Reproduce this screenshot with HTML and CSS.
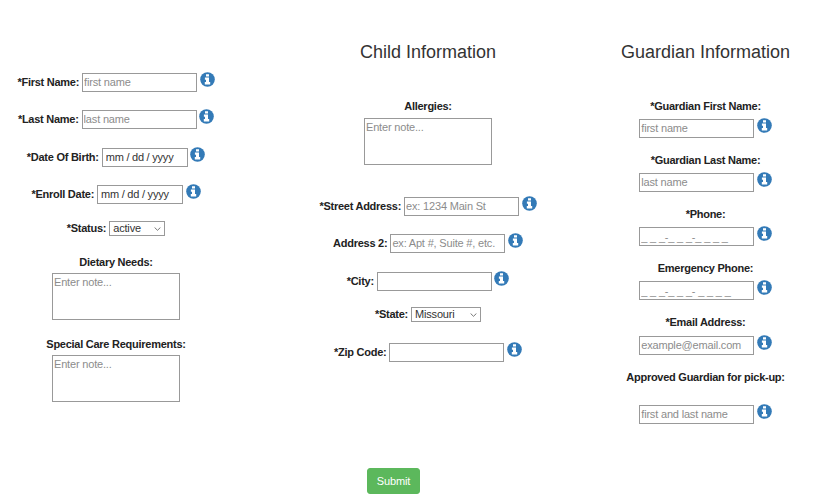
FILE: index.html
```
<!DOCTYPE html>
<html lang="en">
<head>
<meta charset="utf-8">
<title>Child Information</title>
<link rel="stylesheet" href="styles.css">
</head>
<body>
<svg class="defs" width="0" height="0" aria-hidden="true">
  <symbol id="info" viewBox="0 0 15 15">
    <circle cx="7.5" cy="7.5" r="7.3" fill="#337ab7"/>
    <path d="M6 2.2h3v2.4H6zM4.9 5.5H9v4.6h1.2v2.3H4.8v-2.3H6V7.8H4.9z" fill="#fff"/>
  </symbol>
  <symbol id="chevron" viewBox="0 0 7 4">
    <path d="M.6.5 3.5 3.3 6.4.5" fill="none" stroke="#555" stroke-width=".8"/>
  </symbol>
</svg>
<form class="page">
  <div class="columns">
    <section class="col col-left">
      <div class="row"><label>*First Name:</label><input placeholder="first name"><svg class="info"><use href="#info"/></svg></div>
      <div class="row"><label>*Last Name:</label><input placeholder="last name"><svg class="info"><use href="#info"/></svg></div>
      <div class="row"><label>*Date Of Birth:</label><input class="date" value="mm / dd / yyyy"><svg class="info"><use href="#info"/></svg></div>
      <div class="row"><label>*Enroll Date:</label><input class="date" value="mm / dd / yyyy"><svg class="info"><use href="#info"/></svg></div>
      <div class="row"><label>*Status:</label><div class="select status">active<svg class="chevron"><use href="#chevron"/></svg></div></div>
      <label class="title">Dietary Needs:</label>
      <textarea placeholder="Enter note..."></textarea>
      <label class="title">Special Care Requirements:</label>
      <textarea placeholder="Enter note..."></textarea>
    </section>
    <section class="col col-middle">
      <h3>Child Information</h3>
      <label class="title">Allergies:</label>
      <textarea placeholder="Enter note..."></textarea>
      <div class="row"><label>*Street Address:</label><input placeholder="ex: 1234 Main St"><svg class="info"><use href="#info"/></svg></div>
      <div class="row"><label>Address 2:</label><input placeholder="ex: Apt #, Suite #, etc."><svg class="info"><use href="#info"/></svg></div>
      <div class="row"><label>*City:</label><input><svg class="info"><use href="#info"/></svg></div>
      <div class="row"><label>*State:</label><div class="select state">Missouri<svg class="chevron"><use href="#chevron"/></svg></div></div>
      <div class="row"><label>*Zip Code:</label><input><svg class="info"><use href="#info"/></svg></div>
    </section>
    <section class="col col-right">
      <h3>Guardian Information</h3>
      <label class="title">*Guardian First Name:</label>
      <div class="row"><input placeholder="first name"><svg class="info"><use href="#info"/></svg></div>
      <label class="title">*Guardian Last Name:</label>
      <div class="row"><input placeholder="last name"><svg class="info"><use href="#info"/></svg></div>
      <label class="title">*Phone:</label>
      <div class="row"><input class="phone" placeholder="_ _ _-_ _ _-_ _ _ _"><svg class="info"><use href="#info"/></svg></div>
      <label class="title">Emergency Phone:</label>
      <div class="row"><input class="phone" placeholder="_ _ _-_ _ _- _ _ _ _"><svg class="info"><use href="#info"/></svg></div>
      <label class="title">*Email Address:</label>
      <div class="row"><input placeholder="example@email.com"><svg class="info"><use href="#info"/></svg></div>
      <label class="title">Approved Guardian for pick-up:</label>
      <div class="row"><input placeholder="first and last name"><svg class="info"><use href="#info"/></svg></div>
    </section>
  </div>
  <button type="button" class="submit">Submit</button>
</form>
</body>
</html>
```
FILE: styles.css
```
* { box-sizing: border-box; }
body {
  margin: 0;
  background: #fff;
  color: #222;
  font: 11px/15px "Liberation Sans", Arial, sans-serif;
}
.defs { display: block; }
.page { height: 504px; overflow: hidden; }
.columns {
  display: grid;
  grid-template-columns: 232px 392px 163px;
  height: 468px;
}
.col {
  display: grid;
  align-content: start;
  align-items: start;
  justify-items: center;
}
.col-left {
  padding-top: 72px;
  grid-template-rows: 37px 38px 37px 37px 34px 18px 64px 18px 47px;
}
.col-middle {
  padding-top: 40px;
  grid-template-rows: 59px 19px 78px 37px 38px 36px 35px 19px;
}
.col-right {
  width: 190px;
  justify-self: center;
  padding-top: 40px;
  grid-template-rows: 59px 19px 35px 19px 35px 19px 35px 19px 35px 20px 35px 34px 19px;
}
h3 {
  margin: 0;
  font-size: 18px;
  line-height: 24px;
  font-weight: 400;
  white-space: nowrap;
  color: #333;
}
label {
  font-weight: 700;
  letter-spacing: -.26px;
  white-space: nowrap;
}
.row {
  display: flex;
  align-items: center;
  gap: 3px;
}
input, textarea, .select {
  margin: 0;
  border: 1px solid #999;
  border-radius: 0;
  background: #fff;
  color: #333;
  font: inherit;
  letter-spacing: -.18px;
  outline: 0;
}
input {
  width: 115px;
  height: 19px;
  padding: 0 1px;
}
input.date {
  width: 86px;
  padding-left: 3px;
  word-spacing: -.15px;
}
input.phone {
  padding-top: 2px;
}
textarea {
  display: block;
  width: 128px;
  height: 47px;
  padding: 1px;
  resize: none;
}
::placeholder { color: #8c8c8c; opacity: 1; }
.select {
  display: flex;
  align-items: center;
  justify-content: space-between;
  height: 15px;
  padding: 0 3px;
}
.status { width: 56px; }
.state { width: 70px; }
.chevron { width: 7px; height: 4px; }
.info {
  width: 15px;
  height: 15px;
  flex: none;
  margin: 0 0 5px -.5px;
}
.submit {
  display: block;
  width: 53px;
  height: 26px;
  margin: 0 0 0 367px;
  padding: 0;
  border: 1px solid #5cb85c;
  border-radius: 3px;
  background: #5cb85c;
  color: #fff;
  font: inherit;
  letter-spacing: -.1px;
}
```
